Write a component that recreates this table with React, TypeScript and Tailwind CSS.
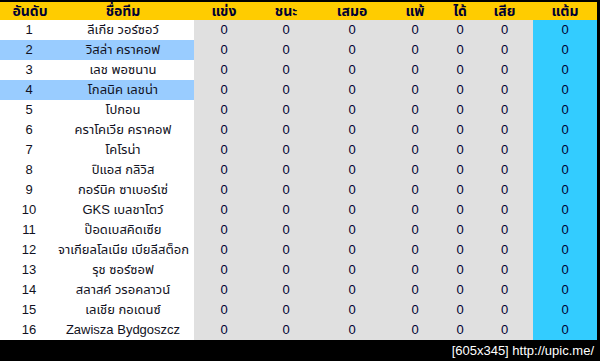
import React from 'react';

const TEAMS = [
  'ลีเกีย วอร์ซอว์',
  'วิสล่า คราคอฟ',
  'เลช พอซนาน',
  'โกลนิค เลชน่า',
  'โปกอน',
  'คราโคเวีย คราคอฟ',
  'โคโรน่า',
  'ปิแอส กลิวิส',
  'กอร์นิค ซาเบอร์เซ่',
  'GKS เบลชาโตว์',
  'ป๊อดเบสคิดเซีย',
  'จาเกียลโลเนีย เบียลีสต็อก',
  'รุช ซอร์ซอฟ',
  'สลาสค์ วรอคลาวน์',
  'เลเชีย กอเดนซ์',
  'Zawisza Bydgoszcz',
];

const HIGHLIGHT = [2, 4];

// widths of the stat columns, left to right
const STAT_COLS = [
  { label: 'แข่ง', w: 'w-[60px]' },
  { label: 'ชนะ', w: 'w-[64px]' },
  { label: 'เสมอ', w: 'w-[68px]' },
  { label: 'แพ้', w: 'w-[58px]' },
  { label: 'ได้', w: 'w-[32px]' },
  { label: 'เสีย', w: 'w-[57px]' },
];

const FONT = "font-['Tahoma','Liberation_Sans','Noto_Sans_Thai','Noto_Sans',sans-serif]";

export default function App() {
  return (
    <div className={`w-[600px] h-[361px] bg-black pt-[2px] pr-[3px] flex flex-col ${FONT}`}>
      {/* header */}
      <div className="flex h-[18px] bg-[#ffcc00] text-[#000033] text-[14px] font-bold leading-[18px]">
        <div className="w-[58px] text-center pl-[2px]">อันดับ</div>
        <div className="w-[136px] text-center pr-[6px]">ชื่อทีม</div>
        {STAT_COLS.map(c => (
          <div key={c.label} className={`${c.w} text-center`}>{c.label}</div>
        ))}
        <div className="w-[64px] text-center">แต้ม</div>
      </div>

      {/* rows */}
      {TEAMS.map((team, i) => {
        const rank = i + 1;
        const hl = HIGHLIGHT.includes(rank);
        return (
          <div key={team} className="flex h-[20px] text-[13px] leading-[20px] text-[#111122]">
            <div className={`flex w-[194px] ${hl ? 'bg-[#99ccff]' : 'bg-white'}`}>
              <div className="w-[58px] text-center">{rank}</div>
              <div className="w-[136px] text-center pr-[6px] whitespace-nowrap">{team}</div>
            </div>
            <div className="flex bg-[#e0e0e0] text-[#000033]">
              {STAT_COLS.map(c => (
                <div key={c.label} className={`${c.w} text-center`}>0</div>
              ))}
            </div>
            <div className="w-[64px] bg-[#33ccff] text-center text-[#000033]">0</div>
          </div>
        );
      })}

      {/* watermark */}
      <div className="flex-1 flex items-center justify-end pr-[3px] text-white text-[13px] font-['Liberation_Sans',sans-serif]">
        [605x345] http://upic.me/
      </div>
    </div>
  );
}
